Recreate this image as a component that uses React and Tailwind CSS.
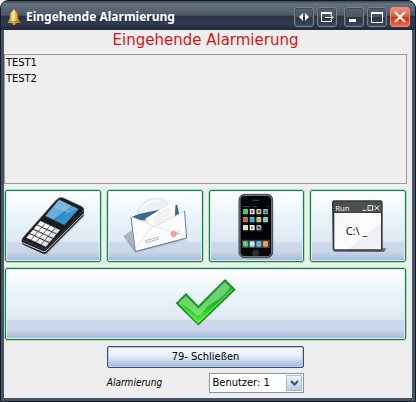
import React from "react";

const actionClass =
  "flex items-center justify-center h-[72px] min-w-0 rounded-[2px] border border-[#28706c] outline-1 outline-[#98f098] shadow-[inset_0_0_0_1px_#dcebf5] bg-[linear-gradient(180deg,#ffffff_0%,#e8f3f9_38%,#dfe9f4_72%,#cbd9ea_73%,#cbd8ea_86%,#a4b8d4_100%)]";

const captionClass =
  "flex h-5 w-5 items-center justify-center rounded-[3px] border border-[#76828f] bg-[linear-gradient(180deg,#566371_0%,#485563_48%,#2a3546_52%,#39475b_100%)] shadow-[inset_0_0_0_1px_#3f4b5a]";

function BellIcon() {
  return (
    <svg width="14" height="16" viewBox="0 0 14 16" aria-hidden="true">
      <defs>
        <linearGradient id="bell" x1="0" x2="1">
          <stop offset="0" stopColor="#b47c1c" />
          <stop offset=".42" stopColor="#fff0a0" />
          <stop offset=".65" stopColor="#dfa02a" />
          <stop offset="1" stopColor="#8d5510" />
        </linearGradient>
      </defs>
      <path d="M6 1 Q7 0 8 1 L8 2 Q11 3 11 7 Q11 11 13 12 L14 14 L1 14 L1 12 Q3 11 3 7 Q3 3 6 2Z" fill="url(#bell)" />
      <path d="M1 12.5H13M5 14h4l-1 2H6Z" stroke="#956016" strokeWidth=".6" fill="#e9b74b" />
    </svg>
  );
}

function PhoneIcon() {
  const keys = [];
  for (let r = 0; r < 4; r++) {
    for (let c = 0; c < 4; c++) {
      const x = 118 + c * 15 - r * 11;
      const y = 117 + c * 7 + r * 13;
      keys.push(
        <path key={`${r}${c}`} d={`M${x} ${y}l14 6-9 11-14-6Z`} fill={c === 3 ? "#dfe2e3" : "#f4f4f4"} stroke="#8c8c8c" strokeWidth=".8" />
      );
    }
  }
  return (
    <svg width="64" height="60" viewBox="60 42 192 180" aria-hidden="true">
      <defs>
        <linearGradient id="screen" x1="0" y1="0" x2="1" y2="1">
          <stop offset="0" stopColor="#79a8d5" />
          <stop offset=".5" stopColor="#68add9" />
          <stop offset=".52" stopColor="#298bc8" />
          <stop offset="1" stopColor="#3ca8df" />
        </linearGradient>
      </defs>
      <path d="M67 190L134 219L252 103L248 91L139 205Z" fill="#8997a9" opacity=".5" />
      <path d="M63 171Q60 176 64 187L123 214Q132 219 139 211L246 103Q250 98 248 82L135 199Z" fill="#16191a" />
      <path d="M64 182L127 209Q133 211 139 204L248 95" fill="none" stroke="#d7dade" strokeWidth="3" />
      <path d="M65 168L166 54Q175 43 187 48L243 74Q252 79 246 87L142 196Q135 204 126 200L68 176Q62 173 65 168Z" fill="#1b1c1d" stroke="#555" strokeWidth="2" />
      <path d="M132 102L174 52L234 81L190 130Z" fill="url(#screen)" stroke="#26343e" strokeWidth="2" />
      <path d="M176 55L230 81L203 93L157 75Z" fill="#a9cce8" opacity=".35" />
      <path d="M188 82L202 89L191 101" fill="none" stroke="#9bd6f5" strokeWidth="3" opacity=".5" />
      {keys}
    </svg>
  );
}

function MailIcon() {
  return (
    <svg width="66" height="60" viewBox="64 45 198 180" aria-hidden="true">
      <path d="M68 165L94 148L102 212Z" fill="#909fae" opacity=".7" />
      <path d="M68 165L104 207L246 173L258 178L105 216Z" fill="#8798aa" opacity=".35" />
      <path d="M112 86Q123 58 158 53Q190 49 203 69L190 91L112 113Z" fill="#edf1f3" stroke="#d3dade" strokeWidth="2" />
      <path d="M121 84Q139 57 180 60" fill="none" stroke="#fff" strokeWidth="4" />
      <path d="M94 107L117 98L176 86L150 118L120 118Z" fill="#3d678c" />
      <path d="M218 74L230 71L235 98L218 108Z" fill="#3d678c" />
      <path d="M134 113L206 68L224 72L222 112L160 151Z" fill="#fff" stroke="#c2c9cd" strokeWidth="1" />
      <path d="M157 112L207 79M160 119L211 86M163 126L214 93M168 132L212 105M176 136L206 118" stroke="#a9b0b5" strokeWidth="1.6" strokeDasharray="5 1" />
      <path d="M91 108L122 119L158 134Q164 137 169 133L214 111L252 90L256 170L103 211Z" fill="#fbfcfd" stroke="#a5afb8" strokeWidth="1" />
      <path d="M103 205L150 143Q160 132 170 139L256 165" fill="none" stroke="#d5dade" strokeWidth="2" />
      <path d="M91 108L104 212L258 171L252 90" fill="none" stroke="#5c6f82" strokeWidth="2.500" />
      <path d="M134 179L173 168M136 185L175 174" stroke="#858d94" strokeWidth="2.500" strokeDasharray="5 1 2 1" />
      <circle cx="219" cy="159" r="8" fill="#f6b9b4" stroke="#dc7777" strokeWidth="2" />
      <path d="M214 156h10M214 161h10M226 155l13-4M227 161l13-4" stroke="#dc8b86" strokeWidth="1.5" />
    </svg>
  );
}

const apps = [
  [130, 84, "#51c46d"], [150, 84, "#eed1d7"], [170, 84, "#c6c0a1"], [190, 84, "#729ec0"],
  [130, 108, "#b56b61"], [150, 108, "#45a9cd"], [170, 108, "#c4b97a"], [190, 108, "#75ceb0"],
  [130, 132, "#ece0a9"], [150, 132, "#eeeeee"], [170, 132, "#9da6ae"],
  [130, 181, "#42c45c"], [150, 181, "#b5dfef"], [170, 181, "#62b5e0"], [190, 181, "#ef9c44"],
];

function SmartphoneIcon() {
  return (
    <svg width="36" height="66" viewBox="115 36 108 198" aria-hidden="true">
      <rect x="118" y="40" width="101" height="190" rx="16" fill="#15191d" stroke="#3b454e" strokeWidth="3" />
      <rect x="121" y="43" width="95" height="184" rx="13" fill="#050607" stroke="#c0c8ce" strokeWidth="2" />
      <rect x="125" y="72" width="87" height="129" fill="#020303" />
      <path d="M158 58h21" stroke="#353b40" strokeWidth="4" />
      <path d="M128 77h22M160 77h13M203 77h6" stroke="#6d7276" strokeWidth="2" />
      <path d="M126 176h85v25h-85Z" fill="#343c42" />
      {apps.map(([x, y, c]) => (
        <g key={`${x}-${y}`}>
          <rect x={x} y={y} width="15" height="16" rx="2" fill={c} />
          <path d={`M${x + 2} ${y + 2}h11`} stroke="#fff" strokeWidth="2" opacity=".45" />
          <path d={`M${x + 2} ${y + 18}h11`} stroke="#777" strokeWidth="1" />
        </g>
      ))}
      <path d="M133 184l8 9M152 186l6 4 5-4" stroke="#fff" strokeWidth="2" fill="none" />
      <path d="M157 88v8M178 87v8M198 91v5M157 137v6M174 136l7 8" stroke="#28313a" strokeWidth="4" />
      <circle cx="168" cy="216" r="9" fill="#171b1e" stroke="#454b50" strokeWidth="2" />
      <rect x="165" y="213" width="6" height="6" rx="1" fill="none" stroke="#92979b" />
    </svg>
  );
}

function RunIcon() {
  return (
    <svg width="56" height="54" viewBox="91 54 168 162" aria-hidden="true">
      <defs>
        <linearGradient id="console" x1="0" y1="0" x2="1" y2="1">
          <stop offset="0" stopColor="#f5f5f5" />
          <stop offset=".64" stopColor="#fdfdfd" />
          <stop offset=".65" stopColor="#eceeef" />
          <stop offset="1" stopColor="#f4f4f5" />
        </linearGradient>
      </defs>
      <path d="M103 203L260 202L253 213L103 212Z" fill="#48515b" opacity=".8" />
      <path d="M97 64Q97 58 103 58H243Q249 58 249 64V205Q249 209 245 209H103Q99 209 99 205Z" fill="#37393b" />
      <path d="M104 62H245V94H104Z" fill="#4d4f50" />
      <path d="M104 96H244V205H104Z" fill="url(#console)" />
      <path d="M189 88h11M205 74h14v14h-14ZM224 74l15 14M239 74l-15 14" stroke="#f2f2f2" strokeWidth="3" fill="none" />
      <text x="107" y="89" fill="#f5f5f5" fontFamily="Noto Sans, sans-serif" fontSize="23">Run</text>
      <text x="138" y="162" fill="#161616" fontFamily="Noto Sans, sans-serif" fontSize="33">C:\ _</text>
    </svg>
  );
}

function CheckIcon() {
  return (
    <svg width="62" height="54" viewBox="73 50 186 162" aria-hidden="true">
      <defs>
        <linearGradient id="tick" x1="0" y1="0" x2="0" y2="1">
          <stop offset="0" stopColor="#2c9f38" />
          <stop offset=".5" stopColor="#19b526" />
          <stop offset="1" stopColor="#55f33b" />
        </linearGradient>
      </defs>
      <path d="M78 129L106 101L143 139L223 59L252 88L143 193Z" fill="url(#tick)" stroke="#b5f4b4" strokeWidth="7" strokeLinejoin="round" />
      <path d="M78 129L106 101L143 139L223 59L252 88L143 193Z" fill="url(#tick)" stroke="#237137" strokeWidth="4" strokeDasharray="8 1" strokeLinejoin="round" />
      <path d="M83 128L106 107L143 146L222 65L238 81Q218 113 187 127Q165 138 153 161Q142 169 130 158Q110 138 83 128Z" fill="#a7e6a3" opacity=".6" />
      <path d="M88 130L143 185L245 88" stroke="#67fa4f" strokeWidth="3" fill="none" />
    </svg>
  );
}

export default function App() {
  return (
    <main className="flex min-h-screen w-full flex-col overflow-hidden rounded-t-lg border border-[#151b25] bg-[#465466] font-['DejaVu_Sans_Condensed','DejaVu_Sans',sans-serif] text-[11px] text-black">
      <header className="flex h-[29px] shrink-0 items-center bg-[linear-gradient(180deg,#3d4651_0%,#66727f_10%,#4d5967_48%,#2a3343_53%,#303b4e_80%,#202839_100%)] pl-1.5 pr-[5px] pt-0.5">
        <BellIcon />
        <h1 className="ml-[5px] flex-1 whitespace-nowrap font-['Noto_Sans',sans-serif] text-[12px] font-bold leading-5 text-white">Eingehende Alarmierung</h1>
        <div className="flex gap-[3px]">
          <button type="button" aria-label="Breite ändern" className={captionClass}>
            <svg width="12" height="10" viewBox="0 0 12 10"><path d="M5 1v8L1 5ZM7 1v8l4-4Z" fill="#fff" /></svg>
          </button>
          <button type="button" aria-label="Verschieben" className={captionClass}>
            <svg width="14" height="12" viewBox="0 0 14 12" fill="none" stroke="#fff"><path d="M11.500 4V1.500h-10v9h10V9M5 6.500h8M10.500 4l2.500 2.500-2.500 2.500" /><path d="M1 2h11" strokeWidth="2" /></svg>
          </button>
          <div className="w-px" />
          <button type="button" aria-label="Minimieren" className={captionClass}>
            <svg width="12" height="12" viewBox="0 0 12 12"><path d="M1 8h7v3H1Z" fill="#fff" /></svg>
          </button>
          <button type="button" aria-label="Maximieren" className={captionClass}>
            <svg width="12" height="12" viewBox="0 0 12 12"><path d="M.5 1.500h11v10H.5Z" fill="none" stroke="#fff" /><path d="M0 1h12v2H0Z" fill="#fff" /></svg>
          </button>
          <button type="button" aria-label="Fenster schließen" className="flex h-5 w-5 items-center justify-center rounded-[3px] border border-[#ee8b79] bg-[linear-gradient(180deg,#ef8d79_0%,#e4583e_48%,#d92e13_52%,#f0684a_100%)]">
            <svg width="12" height="12" viewBox="0 0 12 12"><path d="M1 1l10 10M11 1L1 11" stroke="#fff" strokeWidth="2" /></svg>
          </button>
        </div>
      </header>
      <section className="mx-[3px] mb-[3px] flex flex-1 flex-col bg-[#eeeeee] pr-[5px]">
        <h2 className="h-6 text-center font-['DejaVu_Sans',sans-serif] text-[15px] leading-5 text-[#d41616]">Eingehende Alarmierung</h2>
        <ul className="h-[130px] border border-[#999999] px-px leading-4">
          <li>TEST1</li>
          <li>TEST2</li>
        </ul>
        <div className="mt-1.5 grid grid-cols-4 gap-1.5 px-px">
          <button type="button" aria-label="Telefon" className={actionClass}><PhoneIcon /></button>
          <button type="button" aria-label="E-Mail" className={actionClass}><MailIcon /></button>
          <button type="button" aria-label="Smartphone" className={actionClass}><SmartphoneIcon /></button>
          <button type="button" aria-label="Programm ausführen" className={actionClass}><RunIcon /></button>
        </div>
        <div className="mt-1.5 grid px-px">
          <button type="button" aria-label="Bestätigen" className={actionClass}><CheckIcon /></button>
        </div>
        <div className="mt-1.5 grid grid-cols-4 gap-x-1.5 gap-y-[5px] px-px">
          <button type="button" className="col-span-2 col-start-2 h-[22px] rounded-[2px] border border-[#31527e] bg-[linear-gradient(180deg,#ffffff_0%,#e4eef7_48%,#cbd9eb_66%,#a1b8d8_100%)] leading-4 shadow-[inset_0_0_0_1px_#b7cae3]">79- Schließen</button>
          <label htmlFor="user" className="col-start-2 self-center text-[10px] italic leading-4">Alarmierung</label>
          <div className="relative">
            <select id="user" defaultValue="1" className="block h-5 w-full appearance-none rounded-none border border-[#8d969e] bg-white pl-[3px] pr-5 text-[11px] leading-4">
              <option value="1">Benutzer: 1</option>
            </select>
            <span className="pointer-events-none absolute inset-y-0.5 right-0.5 flex w-4 items-center justify-center border border-[#a9bed1] bg-[linear-gradient(180deg,#edf6fd,#b8cde4)]">
              <svg width="9" height="7" viewBox="0 0 9 7" aria-hidden="true"><path d="M1 1l3.500 3.500L8 1" fill="none" stroke="#3d526c" strokeWidth="2" /></svg>
            </span>
          </div>
        </div>
      </section>
    </main>
  );
}
